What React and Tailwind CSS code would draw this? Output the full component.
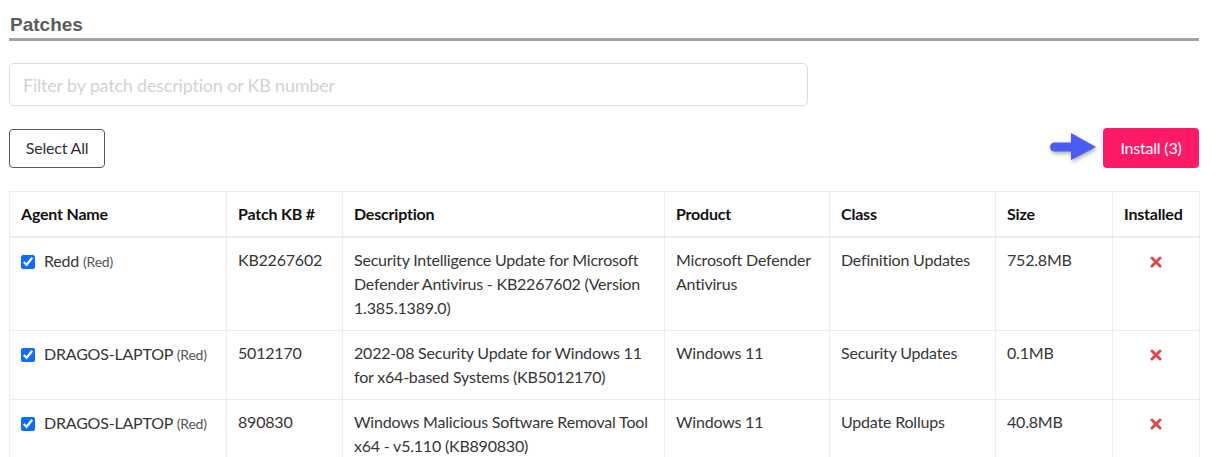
import { useState } from 'react';

const patches = [
  {
    id: 1,
    agent: 'Redd',
    group: 'Red',
    kb: 'KB2267602',
    description: 'Security Intelligence Update for Microsoft Defender Antivirus - KB2267602 (Version 1.385.1389.0)',
    product: 'Microsoft Defender Antivirus',
    cls: 'Definition Updates',
    size: '752.8MB'
  },
  {
    id: 2,
    agent: 'DRAGOS-LAPTOP',
    group: 'Red',
    kb: '5012170',
    description: '2022-08 Security Update for Windows 11 for x64-based Systems (KB5012170)',
    product: 'Windows 11',
    cls: 'Security Updates',
    size: '0.1MB'
  },
  {
    id: 3,
    agent: 'DRAGOS-LAPTOP',
    group: 'Red',
    kb: '890830',
    description: 'Windows Malicious Software Removal Tool x64 - v5.110 (KB890830)',
    product: 'Windows 11',
    cls: 'Update Rollups',
    size: '40.8MB'
  }
];

function TimesIcon() {
  return (
    <svg width="12" height="12" viewBox="0 0 12 12" className="inline-block">
      <path d="M2 2 L10 10 M10 2 L2 10" stroke="#e0474c" strokeWidth="3" strokeLinecap="round" />
    </svg>
  );
}

function Arrow() {
  return (
    <svg width="50" height="32" viewBox="0 0 50 32" className="drop-shadow-[1px_2px_2px_rgba(0,0,0,0.35)]">
      <rect x="1" y="10.5" width="28" height="9" rx="4.5" fill="#4a5cf2" />
      <path d="M22 1 L47 15 L22 28 Z" fill="#4a5cf2" />
    </svg>
  );
}

export default function App() {
  const [filter, setFilter] = useState('');
  const [selected, setSelected] = useState(patches.map((p) => p.id));

  function toggle(id) {
    setSelected((prev) => (prev.includes(id) ? prev.filter((x) => x !== id) : [...prev, id]));
  }

  const th = 'text-left font-bold text-[#111] px-[11px] py-[10px] border border-[#ececec] border-b-2';
  const td = 'align-top px-[11px] py-[10px] border border-[#ececec]';

  return (
    <div className="bg-white min-h-screen pl-[9px] pr-[18px] pt-[14px] text-[16px] leading-[24px] tracking-[-0.2px] text-[#363636] font-['Lato','Source_Sans_Pro',sans-serif]">
      <h2 className="font-['Liberation_Sans',Arial,sans-serif] tracking-normal font-bold text-[19px] leading-[22px] text-[#5c5c5c] pl-px pb-[2px] border-b-[3px] border-[#a3a3a3]">
        Patches
      </h2>

      <input
        className="mt-[22px] block w-[799px] h-[43px] rounded-[5px] border border-[#dcdcdc] px-[13px] text-[18px] placeholder:text-[#d2d2d2] outline-none"
        placeholder="Filter by patch description or KB number"
        value={filter}
        onChange={(e) => setFilter(e.target.value)}
      />

      <div className="mt-[22px] flex items-center justify-between">
        <button className="h-[39px] w-[96px] rounded-[4px] border border-[#5a5a5a] text-[#333] text-[16px]">
          Select All
        </button>
        <div className="flex items-center gap-[4px]">
          <Arrow />
          <button className="h-[40px] w-[96px] rounded-[4px] bg-[#ff1a68] text-white text-[16px]">
            Install ({selected.length})
          </button>
        </div>
      </div>

      <table className="mt-[23px] w-[1190px] table-fixed border-collapse">
        <colgroup>
          <col className="w-[217px]" />
          <col className="w-[116px]" />
          <col className="w-[322px]" />
          <col className="w-[165px]" />
          <col className="w-[166px]" />
          <col className="w-[117px]" />
          <col className="w-[87px]" />
        </colgroup>
        <thead>
          <tr>
            <th className={th}>Agent Name</th>
            <th className={th}>Patch KB #</th>
            <th className={th}>Description</th>
            <th className={th}>Product</th>
            <th className={th}>Class</th>
            <th className={th}>Size</th>
            <th className={th}>Installed</th>
          </tr>
        </thead>
        <tbody>
          {patches
            .filter((p) => (p.description + p.kb).toLowerCase().includes(filter.toLowerCase()))
            .map((p) => (
              <tr key={p.id}>
                <td className={td}>
                  <label className="flex items-center gap-[9px] pt-[1px]">
                    <input
                      type="checkbox"
                      className="w-[14px] h-[14px] accent-[#0d6efd]"
                      checked={selected.includes(p.id)}
                      onChange={() => toggle(p.id)}
                    />
                    <span>
                      {p.agent} <span className="text-[14px] text-[#555]">({p.group})</span>
                    </span>
                  </label>
                </td>
                <td className={td}>{p.kb}</td>
                <td className={td}>{p.description}</td>
                <td className={td}>{p.product}</td>
                <td className={td}>{p.cls}</td>
                <td className={td}>{p.size}</td>
                <td className={td + ' text-center'}>
                  <TimesIcon />
                </td>
              </tr>
            ))}
        </tbody>
      </table>
    </div>
  );
}
